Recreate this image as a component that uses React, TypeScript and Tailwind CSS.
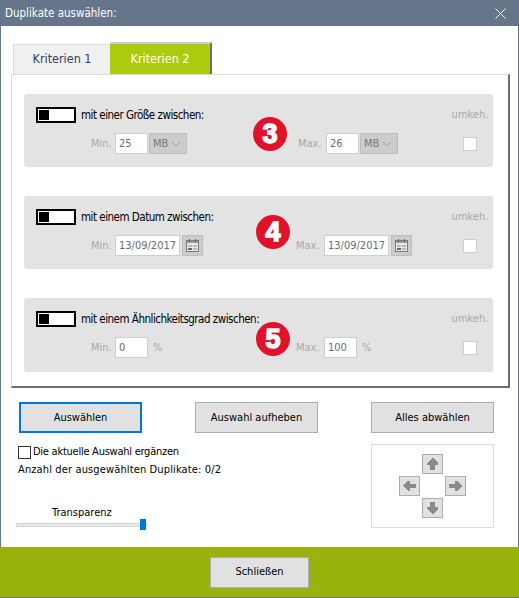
const uiFont = { fontFamily: '"DejaVu Sans Condensed", "DejaVu Sans", sans-serif' }

function ToggleSwitch() {
  return (
    <div className="flex h-4 w-10 items-center border-2 border-black bg-white pl-[1px]">
      <div className="h-[10px] w-[10px] bg-black" />
    </div>
  )
}

function TextBox({ value, width }: { value: string; width: string }) {
  return (
    <div
      className={`flex h-[21px] items-center border border-[#cfcfcf] bg-white pl-[3px] text-[#666c78] ${width}`}
    >
      {value}
    </div>
  )
}

function UnitSelect() {
  return (
    <div className="ml-[1px] flex h-[21px] w-[38px] items-center justify-between border border-[#bdbdbd] bg-[#cccccc] pl-[3px] pr-[5px] text-[#777777]">
      <span>MB</span>
      <svg width="10" height="6" viewBox="0 0 10 6" fill="none" stroke="#a3a3a3">
        <path d="M1 1l4 4 4-4" />
      </svg>
    </div>
  )
}

function CalendarButton() {
  return (
    <div className="ml-[2px] flex h-[21px] w-[21px] items-center justify-center border border-[#bdbdbd] bg-[#cccccc]">
      <svg width="15" height="15" viewBox="0 0 15 15" fill="none">
        <rect x="1.5" y="2.5" width="12" height="11" fill="#e9e9e9" stroke="#7a7a7a" />
        <rect x="2" y="3" width="11" height="2" fill="#a39a9a" />
        <path d="M4.5 1v3M10.5 1v3" stroke="#666666" />
        <path d="M3 7h4v2H3zM8 7h4v2H8zM8 10h4v2H8z" fill="#b8b8b8" />
        <path d="M3 10h4v2H3z" fill="#666666" />
      </svg>
    </div>
  )
}

function NumberBadge({ value, left, top }: { value: string; left: string; top: string }) {
  return (
    <div
      className={`absolute flex h-[34px] w-[34px] items-center justify-center rounded-full bg-[#e2122b] text-[27px] font-bold text-white [-webkit-text-stroke:1.5px_white] ${left} ${top}`}
      style={{ fontFamily: '"Liberation Sans", sans-serif' }}
    >
      {value}
    </div>
  )
}

function FieldLabel({ text, width }: { text: string; width: string }) {
  return <span className={`text-[#a9a9a9] ${width}`}>{text}</span>
}

function CriteriaSection({
  title,
  badge,
  min,
  max,
  leftWidth,
  badgeLeft,
  badgeTop,
  height,
}: {
  title: string
  badge: string
  min: React.ReactNode
  max: React.ReactNode
  leftWidth: string
  badgeLeft: string
  badgeTop: string
  height: string
}) {
  return (
    <section className={`relative flex rounded-[3px] bg-[#e3e3e3] ${height}`}>
      <div className="flex-1 pl-3 pt-[13px]">
        <div className="flex items-center gap-[5px] text-black">
          <ToggleSwitch />
          <span className="text-[11.5px] tracking-[-0.5px]">{title}</span>
        </div>
        <div className="mt-[10px] flex items-center pl-[55px]">
          <div className={`flex items-center ${leftWidth}`}>
            <FieldLabel text="Min." width="w-6" />
            {min}
          </div>
          <FieldLabel text="Max." width="w-7" />
          {max}
        </div>
      </div>
      <div className="flex w-[46px] flex-col items-center pt-[13px]">
        <span className="text-[#a9a9a9]">umkeh.</span>
        <div className="mt-[14px] h-[14px] w-[14px] border border-[#cfcfcf] bg-white" />
      </div>
      <NumberBadge value={badge} left={badgeLeft} top={badgeTop} />
    </section>
  )
}

function ActionButton({ label, active, width }: { label: string; active?: boolean; width: string }) {
  return (
    <button
      className={`flex h-[31px] items-center justify-center bg-[#e1e1e1] text-black ${width} ${
        active ? 'border-2 border-[#0078d7]' : 'border border-[#adadad]'
      }`}
    >
      {label}
    </button>
  )
}

function ArrowButton({ points }: { points: string }) {
  return (
    <div className="flex h-5 w-[21px] items-center justify-center border border-[#adadad] bg-[#e1e1e1]">
      <svg width="15" height="14" viewBox="0 0 15 14" fill="#8a8a8a" shapeRendering="crispEdges">
        <polygon points={points} />
      </svg>
    </div>
  )
}

export default function App() {
  return (
    <div
      className="flex h-[598px] w-[519px] flex-col border border-t-0 border-[#667589] bg-white text-[11px] leading-4"
      style={uiFont}
    >
      <header className="-mx-[1px] flex h-[26px] shrink-0 items-center justify-between bg-[#667589] pl-[5px] pr-[13px] text-[11.5px] text-white">
        <span>Duplikate auswählen:</span>
        <svg width="11" height="11" viewBox="0 0 11 11" stroke="white" fill="none">
          <path d="M.5.5l10 10M10.5.5l-10 10" />
        </svg>
      </header>

      <main className="flex-1 pl-[10px] pr-[8px] pt-4">
        <div className="flex h-8 items-end pl-[2px] text-[12.5px]">
          <div className="flex h-[30px] w-[97px] items-center justify-center border-t border-l border-[#dddddd] bg-[#f0f0f0] pb-[2px] text-[#33415c]">
            Kriterien 1
          </div>
          <div className="flex h-8 w-[102px] items-center justify-center border-t-2 border-r-2 border-t-[#d0d0d0] border-r-[#6e6e6e] bg-[#accb0e] text-white">
            Kriterien 2
          </div>
        </div>

        <div className="flex h-[314px] flex-col gap-[29px] border-t border-l border-b-2 border-r-2 border-t-[#dddddd] border-l-[#dddddd] border-b-[#6e6e6e] border-r-[#6e6e6e] pl-3 pr-[15px] pt-[19px]">
          <CriteriaSection
            title="mit einer Größe zwischen:"
            badge="3"
            badgeLeft="left-[229px]"
            badgeTop="top-[23px]"
            height="h-[73px]"
            leftWidth="w-[207px]"
            min={
              <>
                <TextBox value="25" width="w-[33px]" />
                <UnitSelect />
              </>
            }
            max={
              <>
                <TextBox value="26" width="w-[33px]" />
                <UnitSelect />
              </>
            }
          />
          <CriteriaSection
            title="mit einem Datum zwischen:"
            badge="4"
            badgeLeft="left-[232px]"
            badgeTop="top-[19px]"
            height="h-[73px]"
            leftWidth="w-[205px]"
            min={
              <>
                <TextBox value="13/09/2017" width="w-[65px]" />
                <CalendarButton />
              </>
            }
            max={
              <>
                <TextBox value="13/09/2017" width="w-[65px]" />
                <CalendarButton />
              </>
            }
          />
          <CriteriaSection
            title="mit einem Ähnlichkeitsgrad zwischen:"
            badge="5"
            badgeLeft="left-[232px]"
            badgeTop="top-[24px]"
            height="h-[74px]"
            leftWidth="w-[205px]"
            min={
              <>
                <TextBox value="0" width="w-[33px]" />
                <span className="ml-[5px] text-[#a9a9a9]">%</span>
              </>
            }
            max={
              <>
                <TextBox value="100" width="w-[33px]" />
                <span className="ml-[5px] text-[#a9a9a9]">%</span>
              </>
            }
          />
        </div>

        <div className="mt-[14px] flex justify-between pl-2 pr-[16px]">
          <ActionButton active label="Auswählen" width="w-[123px]" />
          <ActionButton label="Auswahl aufheben" width="w-[123px]" />
          <ActionButton label="Alles abwählen" width="w-[123px]" />
        </div>

        <div className="mt-[11px] flex justify-between pl-[7px] pr-[16px]">
          <div className="flex flex-col">
            <label className="flex items-center gap-[2px] tracking-[-0.25px] text-black">
              <span className="h-[13px] w-[13px] border border-[#333333] bg-white" />
              Die aktuelle Auswahl ergänzen
            </label>
            <p className="mt-[2px] tracking-[0.13px] text-black">Anzahl der ausgewählten Duplikate: 0/2</p>
            <p className="ml-[34px] mt-[27px] text-black">Transparenz</p>
            <div className="relative -ml-[2px] mt-[2px] h-[4px] w-[131px] border border-[#d6d6d6] bg-[#e7eaea]">
              <div className="absolute -top-[5px] right-0 h-[11px] w-[6px] bg-[#0078d7]" />
            </div>
          </div>
          <div className="flex h-[84px] w-[123px] flex-col items-center justify-center gap-[2px] border border-[#dddddd]">
            <ArrowButton points="7,1 8,1 13,6 13,8 10,8 10,13 5,13 5,8 2,8 2,6" />
            <div className="flex gap-[25px]">
              <ArrowButton points="1,7 1,6 6,2 8,2 8,5 14,5 14,9 8,9 8,12 6,12" />
              <ArrowButton points="14,7 14,6 9,2 7,2 7,5 1,5 1,9 7,9 7,12 9,12" />
            </div>
            <ArrowButton points="7,13 8,13 13,8 13,6 10,6 10,1 5,1 5,6 2,6 2,8" />
          </div>
        </div>
      </main>

      <footer className="-mx-[1px] flex h-[50px] shrink-0 items-center justify-center bg-[#99b30c]">
        <ActionButton label="Schließen" width="w-[99px]" />
      </footer>
    </div>
  )
}
